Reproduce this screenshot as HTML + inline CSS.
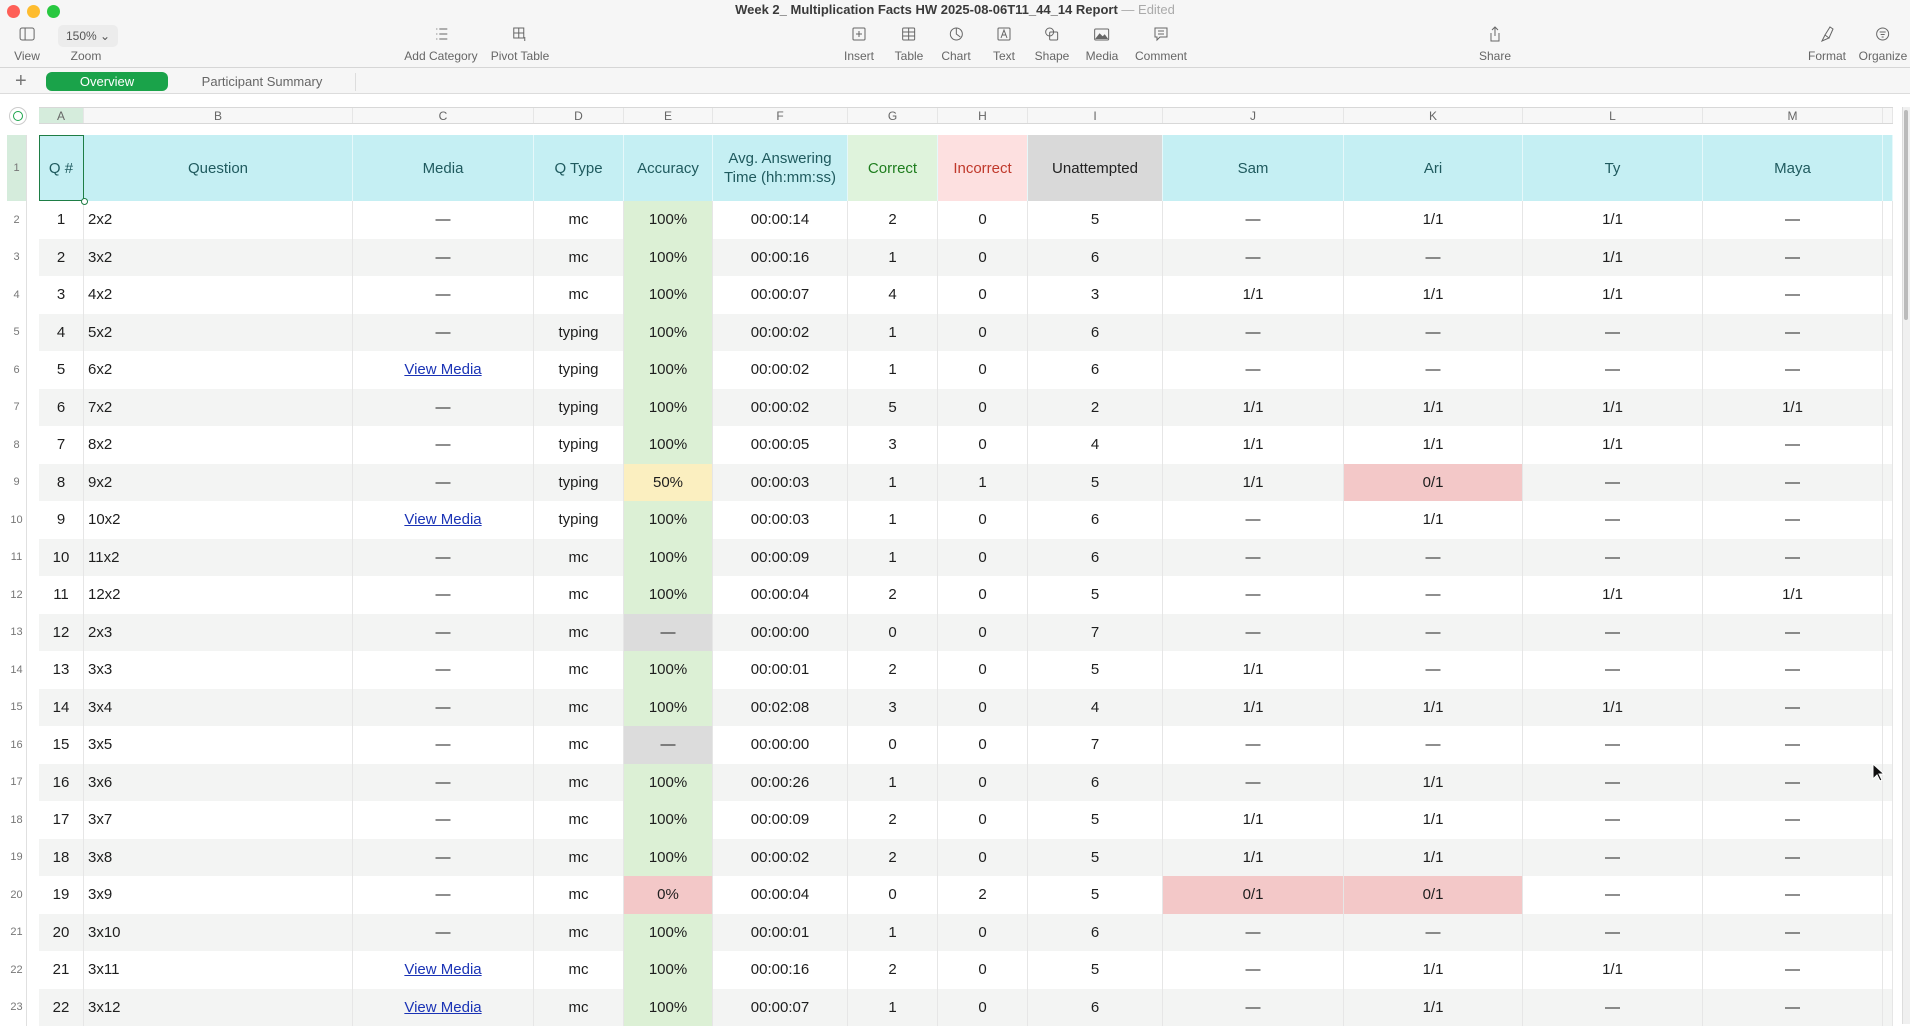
<!DOCTYPE html>
<html><head><meta charset="utf-8"><style>
*{box-sizing:border-box;margin:0;padding:0}
body{width:1910px;height:1024px;overflow:hidden;background:#fff;font-family:"Liberation Sans Narrow","Liberation Sans",sans-serif;color:#1e1e1e;position:relative}
.top{position:absolute;left:0;top:0;width:1910px;height:94px;background:#f6f6f6;border-bottom:1px solid #dcdcdc}
.tb{position:absolute;left:0;top:0;width:1910px;height:68px;border-bottom:1px solid #d6d6d6}
.dot{position:absolute;top:5px;width:13px;height:13px;border-radius:50%}
.title{position:absolute;top:2px;left:0;width:1910px;text-align:center;font:bold 13px "Liberation Sans",sans-serif;color:#3a3a3a}
.title span{font-weight:normal;color:#aaa}
.it{position:absolute;top:25px;text-align:center;font-size:12px;color:#666;transform:translateX(-50%);white-space:nowrap}
.it svg{display:block;margin:0 auto 6px;width:18px;height:18px}
.tab{position:absolute;top:72px;height:19px;font-size:13px;line-height:19px;text-align:center}
.grid{position:absolute;left:39px;display:grid;grid-template-columns:45px 269px 181px 90px 89px 135px 90px 90px 135px 181px 179px 180px 180px 10px}
.grid div{display:flex;align-items:center;justify-content:center;border-right:1px solid #e6e6e6;font-size:15px;white-space:nowrap}
.ch{top:107px;height:17px;background:#f7f7f7;border-top:1px solid #d8d8d8;border-bottom:1px solid #d8d8d8}
.ch div{font-size:12px!important;color:#666}
.hd{top:135px}
.hd div{height:66px;background:#c5eff3;color:#1f5a5e;border-right:1px solid #e6f8fa;text-align:center;line-height:19px}
.body{top:201px}
.body div{height:37.5px}
.l{justify-content:flex-start!important;padding-left:4px}
.a{background:#dcf0d5}.y{background:#fbefc0}.r{background:#f3c8c8}.g{background:#dcdcdc}
.vm{color:#1a33b5;text-decoration:underline}
.rn{position:absolute;left:7px;width:20px;font-size:11px;color:#777;text-align:center;border-right:1px solid #e0e0e0;display:flex;align-items:center;justify-content:center}
</style></head><body>
<div class="top"><div class="tb">
<div class="dot" style="left:7px;background:#fe5f57"></div><div class="dot" style="left:27px;background:#febc2e"></div><div class="dot" style="left:47px;background:#28c840"></div>
<div class="title">Week 2_ Multiplication Facts HW 2025-08-06T11_44_14 Report <span>— Edited</span></div>
<div class="it" style="left:27px"><svg viewBox="0 0 18 18"><rect x="2" y="3" width="14" height="12" rx="2" fill="none" stroke="#666"/><line x1="7" y1="3" x2="7" y2="15" stroke="#666"/></svg>View</div>
<div style="position:absolute;left:58px;top:25px;width:60px;height:22px;border-radius:5px;background:#ececec;font-size:12px;line-height:22px;padding-left:8px;color:#555">150% ⌄</div>
<div class="it" style="left:86px;top:49px">Zoom</div>
<div class="it" style="left:441px"><svg viewBox="0 0 18 18" fill="none" stroke="#666"><path d="M4 4h1M4 9h1M4 14h1M7 4h8M7 9h8M7 14h8"/></svg>Add Category</div>
<div class="it" style="left:520px"><svg viewBox="0 0 18 18" fill="none" stroke="#666"><rect x="3" y="3" width="10" height="10"/><path d="M3 8h10M8 3v10M14 12v4"/></svg>Pivot Table</div>
<div class="it" style="left:859px"><svg viewBox="0 0 18 18" fill="none" stroke="#666"><rect x="3" y="3" width="12" height="12" rx="1"/><path d="M9 6v6M6 9h6"/></svg>Insert</div>
<div class="it" style="left:909px"><svg viewBox="0 0 18 18" fill="none" stroke="#666"><rect x="3" y="3" width="12" height="12" rx="1"/><path d="M3 7h12M3 11h12M9 3v12"/></svg>Table</div>
<div class="it" style="left:956px"><svg viewBox="0 0 18 18" fill="none" stroke="#666"><circle cx="9" cy="9" r="6"/><path d="M9 3v6l4 3"/></svg>Chart</div>
<div class="it" style="left:1004px"><svg viewBox="0 0 18 18" fill="none" stroke="#666"><rect x="3" y="3" width="12" height="12" rx="1"/><path d="M6 13l3-8 3 8M7 10h4"/></svg>Text</div>
<div class="it" style="left:1052px"><svg viewBox="0 0 18 18" fill="none" stroke="#666"><circle cx="7" cy="7" r="4"/><rect x="7" y="7" width="8" height="8" rx="1"/></svg>Shape</div>
<div class="it" style="left:1102px"><svg viewBox="0 0 18 18" fill="none" stroke="#666"><rect x="2" y="4" width="14" height="11" rx="1"/><path d="M3 14l4-5 3 3 2-2 3 4" fill="#666"/></svg>Media</div>
<div class="it" style="left:1161px"><svg viewBox="0 0 18 18" fill="none" stroke="#666"><path d="M3 3h12v9H8l-3 3v-3H3z"/><path d="M6 6h6M6 9h6"/></svg>Comment</div>
<div class="it" style="left:1495px"><svg viewBox="0 0 18 18" fill="none" stroke="#666"><path d="M5 8v8h8V8M9 2v9M6 5l3-3 3 3"/></svg>Share</div>
<div class="it" style="left:1827px"><svg viewBox="0 0 18 18" fill="none" stroke="#666"><path d="M4 16l3-6 4 3zM7 10l5-8 3 2-4 9"/></svg>Format</div>
<div class="it" style="left:1883px"><svg viewBox="0 0 18 18" fill="none" stroke="#666"><circle cx="9" cy="9" r="6"/><path d="M6 7h6M7 9.5h4M8 12h2"/></svg>Organize</div>
</div>
<div style="position:absolute;left:15px;top:70px;font-size:20px;color:#777">+</div>
<div class="tab" style="left:46px;width:122px;background:#1aa34a;color:#fff;border-radius:6px">Overview</div>
<div class="tab" style="left:192px;width:140px;color:#666">Participant Summary</div>
<div style="position:absolute;left:355px;top:73px;width:1px;height:18px;background:#ddd"></div>
</div>
<div style="position:absolute;left:9px;top:107px;width:18px;height:18px;border-radius:50%;border:1px solid #ccc;background:#fff"><div style="margin:3px;width:10px;height:10px;border-radius:50%;border:1.5px solid #1aa34a"></div></div>
<div class="grid ch"><div style="background:#d5ecdc">A</div><div>B</div><div>C</div><div>D</div><div>E</div><div>F</div><div>G</div><div>H</div><div>I</div><div>J</div><div>K</div><div>L</div><div>M</div><div></div></div>
<div class="rn" style="top:135px;height:66px;background:#d5ecdc">1</div>
<div class="grid hd"><div style="outline:1px solid #1e7d45;outline-offset:-1px">Q #</div><div>Question</div><div>Media</div><div>Q Type</div><div>Accuracy</div><div>Avg. Answering<br>Time (hh:mm:ss)</div><div style="background:#dff3dc;color:#1e7d1e">Correct</div><div style="background:#fde0e0;color:#c0392b">Incorrect</div><div style="background:#d9d9d9;color:#222">Unattempted</div><div>Sam</div><div>Ari</div><div>Ty</div><div>Maya</div><div></div></div>
<div style="position:absolute;left:1902px;top:107px;width:8px;height:917px;background:#f0f0f0;border-left:1px solid #ddd"></div>
<div style="position:absolute;left:1904px;top:110px;width:4px;height:210px;background:#bbb;border-radius:2px"></div>
<div class="grid body">
<div>1</div><div class="l">2x2</div><div>—</div><div>mc</div><div class="a">100%</div><div>00:00:14</div><div>2</div><div>0</div><div>5</div><div>—</div><div>1/1</div><div>1/1</div><div>—</div><div></div>
<div style="background:#f3f4f3">2</div><div class="l" style="background:#f3f4f3">3x2</div><div style="background:#f3f4f3">—</div><div style="background:#f3f4f3">mc</div><div class="a">100%</div><div style="background:#f3f4f3">00:00:16</div><div style="background:#f3f4f3">1</div><div style="background:#f3f4f3">0</div><div style="background:#f3f4f3">6</div><div style="background:#f3f4f3">—</div><div style="background:#f3f4f3">—</div><div style="background:#f3f4f3">1/1</div><div style="background:#f3f4f3">—</div><div style="background:#f3f4f3"></div>
<div>3</div><div class="l">4x2</div><div>—</div><div>mc</div><div class="a">100%</div><div>00:00:07</div><div>4</div><div>0</div><div>3</div><div>1/1</div><div>1/1</div><div>1/1</div><div>—</div><div></div>
<div style="background:#f3f4f3">4</div><div class="l" style="background:#f3f4f3">5x2</div><div style="background:#f3f4f3">—</div><div style="background:#f3f4f3">typing</div><div class="a">100%</div><div style="background:#f3f4f3">00:00:02</div><div style="background:#f3f4f3">1</div><div style="background:#f3f4f3">0</div><div style="background:#f3f4f3">6</div><div style="background:#f3f4f3">—</div><div style="background:#f3f4f3">—</div><div style="background:#f3f4f3">—</div><div style="background:#f3f4f3">—</div><div style="background:#f3f4f3"></div>
<div>5</div><div class="l">6x2</div><div><span class="vm">View Media</span></div><div>typing</div><div class="a">100%</div><div>00:00:02</div><div>1</div><div>0</div><div>6</div><div>—</div><div>—</div><div>—</div><div>—</div><div></div>
<div style="background:#f3f4f3">6</div><div class="l" style="background:#f3f4f3">7x2</div><div style="background:#f3f4f3">—</div><div style="background:#f3f4f3">typing</div><div class="a">100%</div><div style="background:#f3f4f3">00:00:02</div><div style="background:#f3f4f3">5</div><div style="background:#f3f4f3">0</div><div style="background:#f3f4f3">2</div><div style="background:#f3f4f3">1/1</div><div style="background:#f3f4f3">1/1</div><div style="background:#f3f4f3">1/1</div><div style="background:#f3f4f3">1/1</div><div style="background:#f3f4f3"></div>
<div>7</div><div class="l">8x2</div><div>—</div><div>typing</div><div class="a">100%</div><div>00:00:05</div><div>3</div><div>0</div><div>4</div><div>1/1</div><div>1/1</div><div>1/1</div><div>—</div><div></div>
<div style="background:#f3f4f3">8</div><div class="l" style="background:#f3f4f3">9x2</div><div style="background:#f3f4f3">—</div><div style="background:#f3f4f3">typing</div><div class="y">50%</div><div style="background:#f3f4f3">00:00:03</div><div style="background:#f3f4f3">1</div><div style="background:#f3f4f3">1</div><div style="background:#f3f4f3">5</div><div style="background:#f3f4f3">1/1</div><div class="r">0/1</div><div style="background:#f3f4f3">—</div><div style="background:#f3f4f3">—</div><div style="background:#f3f4f3"></div>
<div>9</div><div class="l">10x2</div><div><span class="vm">View Media</span></div><div>typing</div><div class="a">100%</div><div>00:00:03</div><div>1</div><div>0</div><div>6</div><div>—</div><div>1/1</div><div>—</div><div>—</div><div></div>
<div style="background:#f3f4f3">10</div><div class="l" style="background:#f3f4f3">11x2</div><div style="background:#f3f4f3">—</div><div style="background:#f3f4f3">mc</div><div class="a">100%</div><div style="background:#f3f4f3">00:00:09</div><div style="background:#f3f4f3">1</div><div style="background:#f3f4f3">0</div><div style="background:#f3f4f3">6</div><div style="background:#f3f4f3">—</div><div style="background:#f3f4f3">—</div><div style="background:#f3f4f3">—</div><div style="background:#f3f4f3">—</div><div style="background:#f3f4f3"></div>
<div>11</div><div class="l">12x2</div><div>—</div><div>mc</div><div class="a">100%</div><div>00:00:04</div><div>2</div><div>0</div><div>5</div><div>—</div><div>—</div><div>1/1</div><div>1/1</div><div></div>
<div style="background:#f3f4f3">12</div><div class="l" style="background:#f3f4f3">2x3</div><div style="background:#f3f4f3">—</div><div style="background:#f3f4f3">mc</div><div class="g">—</div><div style="background:#f3f4f3">00:00:00</div><div style="background:#f3f4f3">0</div><div style="background:#f3f4f3">0</div><div style="background:#f3f4f3">7</div><div style="background:#f3f4f3">—</div><div style="background:#f3f4f3">—</div><div style="background:#f3f4f3">—</div><div style="background:#f3f4f3">—</div><div style="background:#f3f4f3"></div>
<div>13</div><div class="l">3x3</div><div>—</div><div>mc</div><div class="a">100%</div><div>00:00:01</div><div>2</div><div>0</div><div>5</div><div>1/1</div><div>—</div><div>—</div><div>—</div><div></div>
<div style="background:#f3f4f3">14</div><div class="l" style="background:#f3f4f3">3x4</div><div style="background:#f3f4f3">—</div><div style="background:#f3f4f3">mc</div><div class="a">100%</div><div style="background:#f3f4f3">00:02:08</div><div style="background:#f3f4f3">3</div><div style="background:#f3f4f3">0</div><div style="background:#f3f4f3">4</div><div style="background:#f3f4f3">1/1</div><div style="background:#f3f4f3">1/1</div><div style="background:#f3f4f3">1/1</div><div style="background:#f3f4f3">—</div><div style="background:#f3f4f3"></div>
<div>15</div><div class="l">3x5</div><div>—</div><div>mc</div><div class="g">—</div><div>00:00:00</div><div>0</div><div>0</div><div>7</div><div>—</div><div>—</div><div>—</div><div>—</div><div></div>
<div style="background:#f3f4f3">16</div><div class="l" style="background:#f3f4f3">3x6</div><div style="background:#f3f4f3">—</div><div style="background:#f3f4f3">mc</div><div class="a">100%</div><div style="background:#f3f4f3">00:00:26</div><div style="background:#f3f4f3">1</div><div style="background:#f3f4f3">0</div><div style="background:#f3f4f3">6</div><div style="background:#f3f4f3">—</div><div style="background:#f3f4f3">1/1</div><div style="background:#f3f4f3">—</div><div style="background:#f3f4f3">—</div><div style="background:#f3f4f3"></div>
<div>17</div><div class="l">3x7</div><div>—</div><div>mc</div><div class="a">100%</div><div>00:00:09</div><div>2</div><div>0</div><div>5</div><div>1/1</div><div>1/1</div><div>—</div><div>—</div><div></div>
<div style="background:#f3f4f3">18</div><div class="l" style="background:#f3f4f3">3x8</div><div style="background:#f3f4f3">—</div><div style="background:#f3f4f3">mc</div><div class="a">100%</div><div style="background:#f3f4f3">00:00:02</div><div style="background:#f3f4f3">2</div><div style="background:#f3f4f3">0</div><div style="background:#f3f4f3">5</div><div style="background:#f3f4f3">1/1</div><div style="background:#f3f4f3">1/1</div><div style="background:#f3f4f3">—</div><div style="background:#f3f4f3">—</div><div style="background:#f3f4f3"></div>
<div>19</div><div class="l">3x9</div><div>—</div><div>mc</div><div class="r">0%</div><div>00:00:04</div><div>0</div><div>2</div><div>5</div><div class="r">0/1</div><div class="r">0/1</div><div>—</div><div>—</div><div></div>
<div style="background:#f3f4f3">20</div><div class="l" style="background:#f3f4f3">3x10</div><div style="background:#f3f4f3">—</div><div style="background:#f3f4f3">mc</div><div class="a">100%</div><div style="background:#f3f4f3">00:00:01</div><div style="background:#f3f4f3">1</div><div style="background:#f3f4f3">0</div><div style="background:#f3f4f3">6</div><div style="background:#f3f4f3">—</div><div style="background:#f3f4f3">—</div><div style="background:#f3f4f3">—</div><div style="background:#f3f4f3">—</div><div style="background:#f3f4f3"></div>
<div>21</div><div class="l">3x11</div><div><span class="vm">View Media</span></div><div>mc</div><div class="a">100%</div><div>00:00:16</div><div>2</div><div>0</div><div>5</div><div>—</div><div>1/1</div><div>1/1</div><div>—</div><div></div>
<div style="background:#f3f4f3">22</div><div class="l" style="background:#f3f4f3">3x12</div><div style="background:#f3f4f3"><span class="vm">View Media</span></div><div style="background:#f3f4f3">mc</div><div class="a">100%</div><div style="background:#f3f4f3">00:00:07</div><div style="background:#f3f4f3">1</div><div style="background:#f3f4f3">0</div><div style="background:#f3f4f3">6</div><div style="background:#f3f4f3">—</div><div style="background:#f3f4f3">1/1</div><div style="background:#f3f4f3">—</div><div style="background:#f3f4f3">—</div><div style="background:#f3f4f3"></div>
</div>
<div style="position:absolute;left:7px;top:201px;width:20px">
<div class="rn" style="position:static;height:37.5px">2</div><div class="rn" style="position:static;height:37.5px">3</div><div class="rn" style="position:static;height:37.5px">4</div><div class="rn" style="position:static;height:37.5px">5</div><div class="rn" style="position:static;height:37.5px">6</div><div class="rn" style="position:static;height:37.5px">7</div><div class="rn" style="position:static;height:37.5px">8</div><div class="rn" style="position:static;height:37.5px">9</div><div class="rn" style="position:static;height:37.5px">10</div><div class="rn" style="position:static;height:37.5px">11</div><div class="rn" style="position:static;height:37.5px">12</div><div class="rn" style="position:static;height:37.5px">13</div><div class="rn" style="position:static;height:37.5px">14</div><div class="rn" style="position:static;height:37.5px">15</div><div class="rn" style="position:static;height:37.5px">16</div><div class="rn" style="position:static;height:37.5px">17</div><div class="rn" style="position:static;height:37.5px">18</div><div class="rn" style="position:static;height:37.5px">19</div><div class="rn" style="position:static;height:37.5px">20</div><div class="rn" style="position:static;height:37.5px">21</div><div class="rn" style="position:static;height:37.5px">22</div><div class="rn" style="position:static;height:37.5px">23</div>
</div>
<svg style="position:absolute;left:1872px;top:763px" width="14" height="20" viewBox="0 0 14 20"><path d="M1 1v15l4-4 3 6 2-1-3-6h5z" fill="#111" stroke="#fff"/></svg>
<div style="position:absolute;left:81px;top:198px;width:7px;height:7px;border-radius:50%;border:1.5px solid #1e7d45;background:#fff"></div>
</body></html>
